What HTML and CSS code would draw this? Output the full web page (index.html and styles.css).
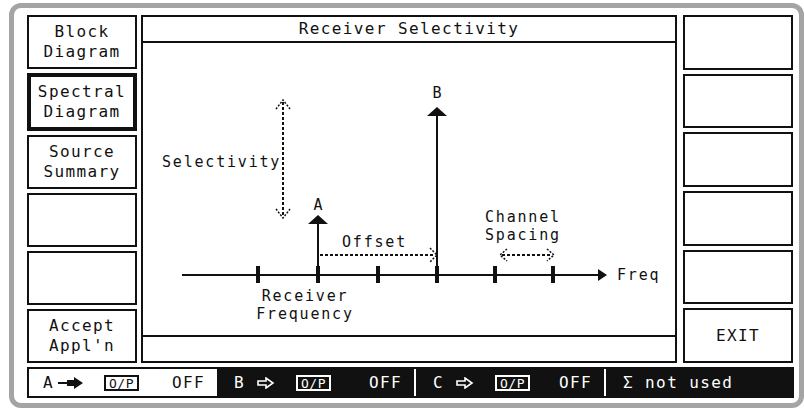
FILE: index.html
```html
<!DOCTYPE html>
<html lang="en">
<head>
    <meta charset="UTF-8">
    <meta name="viewport" content="width=device-width, initial-scale=1.0">
    <title>Receiver Selectivity</title>
    <link rel="stylesheet" href="styles.css">
</head>
<body>
    <div class="screen">
        <div class="layout">
            <div class="softkeys">
                <div class="key">Block<br>Diagram</div>
                <div class="key active">Spectral<br>Diagram</div>
                <div class="key">Source<br>Summary</div>
                <div class="key"></div>
                <div class="key"></div>
                <div class="key">Accept<br>Appl'n</div>
            </div>

            <div class="panel">
                <div class="panel-title">Receiver Selectivity</div>
                <div class="diagram">
                    <svg width="532" height="292" viewBox="0 0 532 292">
                        <!-- frequency axis -->
                        <line class="solid" x1="39" y1="232" x2="457" y2="232"/>
                        <polygon class="fill" points="455,226 464,232 455,238"/>
                        <rect class="fill" x="113" y="223" width="4" height="17"/>
                        <rect class="fill" x="173" y="223" width="4" height="17"/>
                        <rect class="fill" x="233" y="223" width="4" height="17"/>
                        <rect class="fill" x="292" y="223" width="4" height="17"/>
                        <rect class="fill" x="350" y="223" width="4" height="17"/>
                        <rect class="fill" x="408" y="223" width="4" height="17"/>

                        <!-- signals -->
                        <line class="solid" x1="175" y1="232" x2="175" y2="180"/>
                        <polygon class="fill" points="175,172 165,181 185,181"/>
                        <line class="solid" x1="294" y1="232" x2="294" y2="72"/>
                        <polygon class="fill" points="294,64 284,73 304,73"/>

                        <!-- selectivity -->
                        <line class="dash" x1="140" y1="59" x2="140" y2="173"/>
                        <polyline class="dash thin" points="133,66 140,57 147,66"/>
                        <polyline class="dash thin" points="133,166 140,175 147,166"/>

                        <!-- offset -->
                        <line class="dash" x1="177" y1="212" x2="292" y2="212"/>
                        <polyline class="dash thin" points="287,205 294,212 287,219"/>

                        <!-- channel spacing -->
                        <line class="dash" x1="359" y1="212" x2="408" y2="212"/>
                        <polyline class="dash thin" points="364,206 357,212 364,218"/>
                        <polyline class="dash thin" points="404,206 411,212 404,218"/>

                        <text x="19" y="124">Selectivity</text>
                        <text x="176" y="167" text-anchor="middle">A</text>
                        <text x="295" y="55" text-anchor="middle">B</text>
                        <text x="199" y="204">Offset</text>
                        <text x="342" y="179">Channel</text>
                        <text x="342" y="197">Spacing</text>
                        <text x="474" y="237">Freq</text>
                        <text x="162" y="258" text-anchor="middle">Receiver</text>
                        <text x="162" y="276" text-anchor="middle">Frequency</text>
                    </svg>
                </div>
                <div class="panel-status"></div>
            </div>

            <div class="softkeys">
                <div class="key"></div>
                <div class="key"></div>
                <div class="key"></div>
                <div class="key"></div>
                <div class="key"></div>
                <div class="key">EXIT</div>
            </div>
        </div>

        <div class="outputs">
            <div class="seg seg-a">
                <span class="seg-name">A</span>
                <svg class="seg-arrow" width="26" height="12" viewBox="0 0 26 12">
                    <line x1="0" y1="6" x2="10" y2="6" stroke="#111" stroke-width="2"/>
                    <path d="M9 3 H16 V0 L25 6 L16 12 V9 H9 Z" fill="#111"/>
                </svg>
                <span class="op">O/P</span>
                <span class="state">OFF</span>
            </div>
            <div class="seg dark">
                <span class="seg-name">B</span>
                <svg class="seg-arrow" width="18" height="12" viewBox="0 0 18 12">
                    <path d="M1 4 H9 V1 L16 6 L9 11 V8 H1 Z" fill="none" stroke="#fff" stroke-width="1.6"/>
                </svg>
                <span class="op">O/P</span>
                <span class="state">OFF</span>
            </div>
            <div class="seg dark gap">
                <span class="seg-name">C</span>
                <svg class="seg-arrow" width="18" height="12" viewBox="0 0 18 12">
                    <path d="M1 4 H9 V1 L16 6 L9 11 V8 H1 Z" fill="none" stroke="#fff" stroke-width="1.6"/>
                </svg>
                <span class="op">O/P</span>
                <span class="state">OFF</span>
            </div>
            <div class="seg dark gap sum">&Sigma; not used</div>
        </div>
    </div>
</body>
</html>
```

FILE: styles.css
```css
body {
    margin: 0;
    background-color: white;
    font-family: 'DejaVu Sans Mono', 'Liberation Mono', monospace;
    font-size: 16px;
    letter-spacing: 1.4px;
    color: #111;
}
.screen {
    box-sizing: border-box;
    width: 795px;
    height: 405px;
    margin: 3px 0 0 9px;
    border: 5px solid #a4a4a4;
    border-radius: 12px;
    padding: 7px 5px 5px 13px;
    display: flex;
    flex-direction: column;
    gap: 4px;
}
.layout {
    display: flex;
    height: 348px;
}
.softkeys {
    width: 110px;
    display: flex;
    flex-direction: column;
    gap: 4px;
}
.key {
    flex: 1;
    box-sizing: border-box;
    border: 2px solid #111;
    display: flex;
    align-items: center;
    justify-content: center;
    text-align: center;
    line-height: 20px;
}
.key.active {
    border-width: 4px;
}
.panel {
    width: 536px;
    box-sizing: border-box;
    margin: 0 6px 0 4px;
    border: 2px solid #111;
    display: flex;
    flex-direction: column;
}
.panel-title {
    height: 24px;
    line-height: 24px;
    border-bottom: 2px solid #111;
    text-align: center;
}
.diagram {
    flex: 1;
}
.diagram svg {
    display: block;
}
.diagram text {
    font-family: 'DejaVu Sans Mono', 'Liberation Mono', monospace;
    font-size: 15px;
    letter-spacing: 1.8px;
    fill: #111;
}
.diagram .solid {
    stroke: #111;
    stroke-width: 2;
}
.diagram .fill {
    fill: #111;
}
.diagram .dash {
    fill: none;
    stroke: #111;
    stroke-width: 2;
    stroke-dasharray: 3 2;
}
.diagram .dash.thin {
    stroke-width: 1.5;
    stroke-dasharray: 2 1.5;
}
.panel-status {
    height: 24px;
    border-top: 2px solid #111;
}
.outputs {
    height: 31px;
    box-sizing: border-box;
    border: 2px solid #111;
    display: flex;
}
.seg {
    display: flex;
    align-items: center;
    box-sizing: border-box;
    padding: 0 12px 0 14px;
}
.seg-a {
    width: 188px;
}
.dark {
    width: 197px;
    background-color: #111;
    color: white;
    padding-left: 17px;
}
.gap {
    width: 188px;
    margin-left: 2px;
}
.seg-name {
    width: 15px;
}
.seg-arrow {
    margin-right: 20px;
}
.dark .seg-arrow {
    margin-left: 8px;
    margin-right: 21px;
}
.op {
    width: 35px;
    box-sizing: border-box;
    border: 2px solid currentColor;
    font-size: 13px;
    letter-spacing: 0.5px;
    line-height: 11px;
    text-align: center;
    padding-top: 1px;
}
.state {
    margin-left: auto;
}
.sum {
    flex: 1;
    padding-left: 17px;
}
```
